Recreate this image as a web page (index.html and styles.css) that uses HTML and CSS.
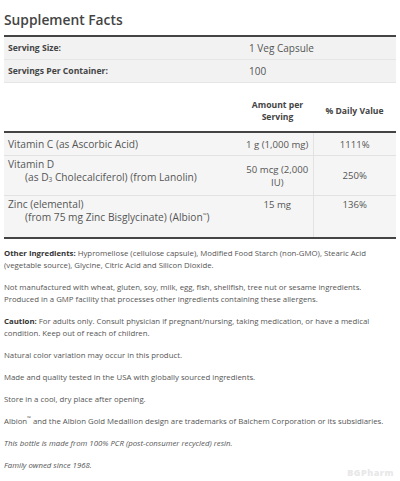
FILE: index.html
```html
<!DOCTYPE html>
<html>
<head>
<meta charset="utf-8">
<link rel="stylesheet" href="styles.css">
</head>
<body>
<div class="page">
  <h1 class="title">Supplement Facts</h1>
  <table class="serving">
    <tr><td class="lbl">Serving Size:</td><td class="val">1 Veg Capsule</td></tr>
    <tr><td class="lbl">Servings Per Container:</td><td class="val">100</td></tr>
  </table>
  <table class="facts">
    <thead>
      <tr><th class="name"></th><th class="amt">Amount per<br>Serving</th><th class="dv">% Daily Value</th></tr>
    </thead>
    <tbody>
      <tr class="short"><td class="name">Vitamin C (as Ascorbic Acid)</td><td class="amt">1 g (1,000 mg)</td><td class="dv">1111%</td></tr>
      <tr class="tall"><td class="name">Vitamin D<div class="sub">(as D<sub>3</sub> Cholecalciferol) (from Lanolin)</div></td><td class="amt">50 mcg (2,000 IU)</td><td class="dv">250%</td></tr>
      <tr class="tall"><td class="name">Zinc (elemental)<div class="sub">(from 75 mg Zinc Bisglycinate) (Albion<sup>™</sup>)</div></td><td class="amt top">15 mg</td><td class="dv top">136%</td></tr>
    </tbody>
  </table>
  <div class="notes">
    <p><b>Other Ingredients:</b> Hypromellose (cellulose capsule), Modified Food Starch (non-GMO), Stearic Acid (vegetable source), Glycine, Citric Acid and Silicon Dioxide.</p>
    <p>Not manufactured with wheat, gluten, soy, milk, egg, fish, shellfish, tree nut or sesame ingredients. Produced in a GMP facility that processes other ingredients containing these allergens.</p>
    <p><b>Caution:</b> For adults only. Consult physician if pregnant/nursing, taking medication, or have a medical condition. Keep out of reach of children.</p>
    <p>Natural color variation may occur in this product.</p>
    <p>Made and quality tested in the USA with globally sourced ingredients.</p>
    <p>Store in a cool, dry place after opening.</p>
    <p>Albion<sup>™</sup> and the Albion Gold Medallion design are trademarks of Balchem Corporation or its subsidiaries.</p>
    <p><i>This bottle is made from 100% PCR (post-consumer recycled) resin.</i></p>
    <p><i>Family owned since 1968.</i></p>
  </div>
  <div class="mark">BGPharm</div>
</div>
</body>
</html>
```
FILE: styles.css
```css
html, body { margin: 0; padding: 0; background: #fff; }
body { font-family: "Open Sans", "Noto Sans", sans-serif; color: #555; }
.page { padding: 0 4px; position: relative; height: 481px; overflow: hidden; }
.title { margin: 0; padding-top: 10px; height: 25px; font-size: 13.8px; font-weight: 600; color: #444; line-height: 20px; }
table { border-collapse: collapse; width: 392px; table-layout: fixed; }
td, th { padding: 0; }
.serving { border-top: 2px solid #444; }
.serving td { background: #f2f2f2; height: 22px; border-bottom: 1px solid #e6e6e6; vertical-align: middle; }
.serving .lbl { width: 238px; padding-left: 4px; font-weight: 700; font-size: 8.6px; color: #444; }
.serving .val { color: #555; padding-left: 3px; font-size: 10px; }
.facts thead th { height: 49px; font-size: 8.6px; font-weight: 700; color: #444; line-height: 12px; vertical-align: middle; padding-top: 8px; box-sizing: border-box; border-bottom: 2px solid #444; }
.facts .name { width: 238px; text-align: left; padding-left: 4px; }
.facts .amt { width: 71px; text-align: center; }
.facts .dv { text-align: center; }
.facts tbody td { background: #f5f5f5; font-size: 9.6px; color: #555; line-height: 13px; border-bottom: 1px solid #e2e2e2; vertical-align: middle; }
.facts tbody td.name { font-size: 10.2px; }
.facts tbody tr.short td { height: 22px; }
.facts tbody tr.tall td { height: 39px; }
.facts tbody tr.tall td.name { vertical-align: top; padding-top: 2px; height: 37px; }
.facts tbody tr:last-child td { border-bottom: 2px solid #444; }
.facts tbody td.dv { border-left: 1px solid #e2e2e2; }
.facts tbody td.amt { padding-left: 4px; padding-right: 4px; }
.facts tbody td.top { vertical-align: top; padding-top: 2px; height: 37px; }
.sub { padding-left: 17px; }
sub { font-size: 6.5px; vertical-align: -1px; line-height: 0; }
sup { font-size: 5px; vertical-align: 4px; line-height: 0; }
.notes { padding-top: 8px; font-size: 7.8px; line-height: 12px; color: #555; }
.notes p { margin: 0 0 10px; }
.notes b { color: #333; font-weight: 700; }
.mark { position: absolute; right: 6px; bottom: 2px; font-size: 9px; font-weight: 800; color: #e8e8e8; letter-spacing: 0.5px; }
```
